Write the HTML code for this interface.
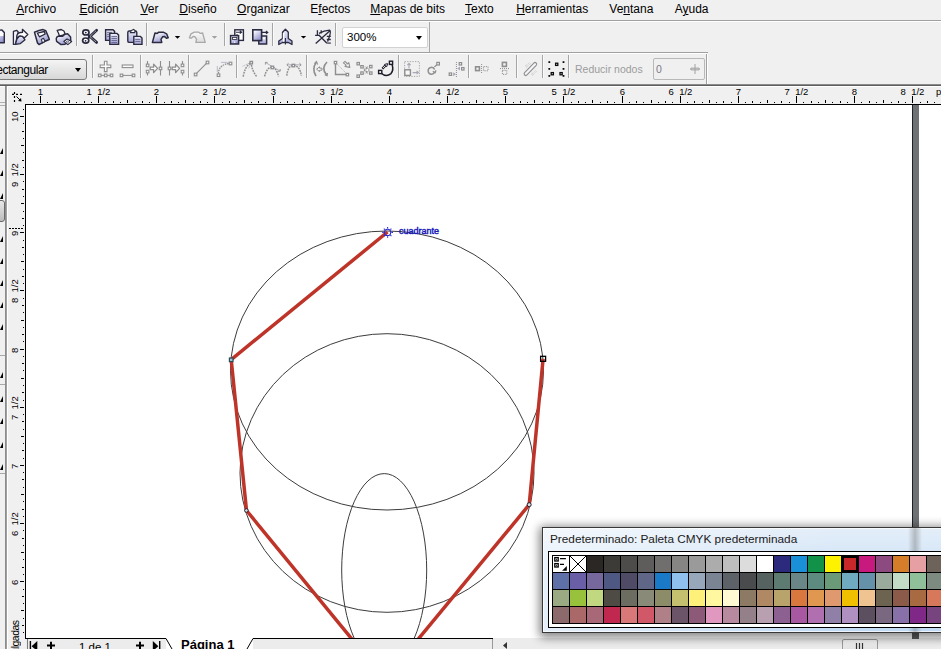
<!DOCTYPE html>
<html><head><meta charset="utf-8"><style>
html,body{margin:0;padding:0}
body{width:941px;height:649px;overflow:hidden;position:relative;background:#f0f0f0;font-family:'Liberation Sans', sans-serif}
.mi{position:absolute;top:2px;font-size:12px;color:#000;white-space:nowrap}
.mi u{text-decoration:underline;text-underline-offset:1px}
.tri{position:absolute;width:0;height:0;border-style:solid;border-width:4px 3px 0 3px;border-color:#000 transparent transparent transparent}
.rl{position:absolute;text-align:center;font-size:9.5px;line-height:10px;color:#000;white-space:nowrap}
.rlv{position:absolute;left:10px;width:10px;height:60px;writing-mode:vertical-rl;transform:rotate(180deg);text-align:center;font-size:9.5px;line-height:10px;color:#000;white-space:nowrap}
</style></head><body>
<div class="mi" style="left:16.2px"><u>A</u>rchivo</div><div class="mi" style="left:79.4px"><u>E</u>dición</div><div class="mi" style="left:140.4px"><u>V</u>er</div><div class="mi" style="left:179.3px"><u>D</u>iseño</div><div class="mi" style="left:237.1px"><u>O</u>rganizar</div><div class="mi" style="left:310.3px">E<u>f</u>ectos</div><div class="mi" style="left:370.3px"><u>M</u>apas de bits</div><div class="mi" style="left:465px"><u>T</u>exto</div><div class="mi" style="left:516.2px"><u>H</u>erramientas</div><div class="mi" style="left:609.3px">Ve<u>n</u>tana</div><div class="mi" style="left:674.7px">A<u>y</u>uda</div><div style="position:absolute;left:0;top:20px;width:941px;height:1px;background:#a0a0a0"></div><div style="position:absolute;left:0;top:21px;width:941px;height:1px;background:#fff"></div><div style="position:absolute;left:0;top:52px;width:708px;height:1px;background:#a0a0a0"></div><div style="position:absolute;left:0;top:53px;width:707px;height:1px;background:#fff"></div><div style="position:absolute;left:429px;top:22px;width:1px;height:30px;background:#a8a8a8"></div><div style="position:absolute;left:706px;top:54px;width:1px;height:30px;background:#a0a0a0"></div><div style="position:absolute;left:707px;top:54px;width:1px;height:30px;background:#fff"></div><div style="position:absolute;left:0;top:84px;width:941px;height:1px;background:#8a8a8a"></div><div style="position:absolute;left:0;top:85px;width:941px;height:1px;background:#5e5e5e"></div><div style="position:absolute;left:0;top:86px;width:941px;height:1px;background:#fff"></div><div style="position:absolute;left:76px;top:23px;width:1px;height:23px;background:#a6a6a6"></div><div style="position:absolute;left:77px;top:23px;width:1px;height:23px;background:#fafafa"></div><div style="position:absolute;left:146px;top:23px;width:1px;height:23px;background:#a6a6a6"></div><div style="position:absolute;left:147px;top:23px;width:1px;height:23px;background:#fafafa"></div><div style="position:absolute;left:224px;top:23px;width:1px;height:23px;background:#a6a6a6"></div><div style="position:absolute;left:225px;top:23px;width:1px;height:23px;background:#fafafa"></div><div style="position:absolute;left:272px;top:23px;width:1px;height:23px;background:#a6a6a6"></div><div style="position:absolute;left:273px;top:23px;width:1px;height:23px;background:#fafafa"></div><div style="position:absolute;left:335px;top:23px;width:1px;height:23px;background:#a6a6a6"></div><div style="position:absolute;left:336px;top:23px;width:1px;height:23px;background:#fafafa"></div><div style="position:absolute;left:92px;top:55px;width:1px;height:23px;background:#a6a6a6"></div><div style="position:absolute;left:93px;top:55px;width:1px;height:23px;background:#fafafa"></div><div style="position:absolute;left:140px;top:55px;width:1px;height:23px;background:#a6a6a6"></div><div style="position:absolute;left:141px;top:55px;width:1px;height:23px;background:#fafafa"></div><div style="position:absolute;left:188px;top:55px;width:1px;height:23px;background:#a6a6a6"></div><div style="position:absolute;left:189px;top:55px;width:1px;height:23px;background:#fafafa"></div><div style="position:absolute;left:236px;top:55px;width:1px;height:23px;background:#a6a6a6"></div><div style="position:absolute;left:237px;top:55px;width:1px;height:23px;background:#fafafa"></div><div style="position:absolute;left:306px;top:55px;width:1px;height:23px;background:#a6a6a6"></div><div style="position:absolute;left:307px;top:55px;width:1px;height:23px;background:#fafafa"></div><div style="position:absolute;left:398px;top:55px;width:1px;height:23px;background:#a6a6a6"></div><div style="position:absolute;left:399px;top:55px;width:1px;height:23px;background:#fafafa"></div><div style="position:absolute;left:468px;top:55px;width:1px;height:23px;background:#a6a6a6"></div><div style="position:absolute;left:469px;top:55px;width:1px;height:23px;background:#fafafa"></div><div style="position:absolute;left:516px;top:55px;width:1px;height:23px;background:#a6a6a6"></div><div style="position:absolute;left:517px;top:55px;width:1px;height:23px;background:#fafafa"></div><div style="position:absolute;left:542px;top:55px;width:1px;height:23px;background:#a6a6a6"></div><div style="position:absolute;left:543px;top:55px;width:1px;height:23px;background:#fafafa"></div><div style="position:absolute;left:568px;top:55px;width:1px;height:23px;background:#a6a6a6"></div><div style="position:absolute;left:569px;top:55px;width:1px;height:23px;background:#fafafa"></div><svg width="0" height="0" style="position:absolute"><defs>
<linearGradient id="lv" x1="0" y1="0" x2="1" y2="1"><stop offset="0" stop-color="#f0f0fa"/><stop offset="1" stop-color="#8c8cc0"/></linearGradient>
<linearGradient id="lg" x1="0" y1="0" x2="0" y2="1"><stop offset="0" stop-color="#ffffff"/><stop offset="1" stop-color="#c8c8c8"/></linearGradient>
</defs></svg><svg style="position:absolute;left:0;top:0" width="941" height="86" viewBox="0 0 941 86"><defs><linearGradient id="gl" x1="0" y1="0" x2="0.6" y2="1"><stop offset="0.15" stop-color="#fcfcff"/><stop offset="1" stop-color="#9494cc"/></linearGradient><linearGradient id="gl2" x1="0" y1="0" x2="0" y2="1"><stop offset="0" stop-color="#f0f0fa"/><stop offset="1" stop-color="#a4a4d6"/></linearGradient><linearGradient id="gd" x1="0" y1="0" x2="0" y2="1"><stop offset="0" stop-color="#fafafa"/><stop offset="1" stop-color="#dcdcdc"/></linearGradient></defs><path d="M-6 30.5 L2 30 L4.3 32.5 L4.3 42.7 L-6 42.7 Z" fill="url(#gl)" stroke="#2a2a40" stroke-width="1.4" stroke-linejoin="round"/><path d="M-6 31.5 L1.5 31.2 L3.3 33.3 L3.3 36 L-6 36 Z" fill="#fff"/><path d="M13.4 44.4 V31.4 L16.8 30.3 L18.2 32 L16.6 38.8 L15.6 44.2 Z" fill="#f2f2fa" stroke="#2a2a40" stroke-width="1.3" stroke-linejoin="round"/><path d="M15.4 44.4 L17 38.8 L19.8 35.8 L22.4 36.2 L25 39.8 L20.4 43.6 Z" fill="url(#gl2)" stroke="#2a2a40" stroke-width="1.3" stroke-linejoin="round"/><path d="M16.6 38.8 L17 35.2 Q18 32.6 20.6 32.5 L22.5 32.4 L22.4 29.3 L27.8 34.5 L24.2 38 L22.4 36.3 Q20.5 35.5 19.2 36 Q17.6 37.2 16.6 38.8 Z" fill="#fff" stroke="#2a2a40" stroke-width="1.3" stroke-linejoin="round"/><path d="M34.5 32.2 L39 30.5 L43 29.6 L45.8 30.8 L48.7 37.5 L49.3 39.5 L45 41.3 L39 44.6 L37.5 43 Z" fill="url(#gl)" stroke="#2a2a40" stroke-width="1.5" stroke-linejoin="round"/><path d="M37.4 33.2 L44.3 31.5 L45.2 34 L39.4 36.8 Z" fill="#fff" stroke="#2a2a40" stroke-width="1.3" stroke-linejoin="round"/><path d="M41.3 39.4 L43.5 38.3 L45 41.2 L42.5 42.9 Z" fill="#fff" stroke="#2a2a40" stroke-width="1.1" stroke-linejoin="round"/><path d="M56.2 38.6 Q56.6 36.4 58.8 36 L62.4 36.4 L65 34.2 L67.6 33.8 L70.6 37 L70.8 41 L65 44.2 L61 44.6 L56.6 41.4 Z" fill="url(#gl)" stroke="#2a2a40" stroke-width="1.4" stroke-linejoin="round"/><path d="M57.2 30.4 L61.2 29.5 L63.9 31 L65 33.5 L63 35.2 L59.5 36 L58.4 33 Z" fill="#fff" stroke="#2a2a40" stroke-width="1.3" stroke-linejoin="round"/><path d="M63.8 41.4 L67 39 L71.6 41.6 L67.8 44.6 Z" fill="#fff" stroke="#2a2a40" stroke-width="1.2" stroke-linejoin="round"/><path d="M66.2 41.8 L67.4 41 L68.8 41.8 L67.6 42.8 Z" fill="none" stroke="#2a2a40" stroke-width="0.7"/><path d="M89.2 37.2 L96.6 30.2 M89.2 35.8 L96.6 42.4" stroke="#2a2a40" stroke-width="2.8" stroke-linecap="round"/><path d="M90 36.4 L96.2 30.6 M90 36.6 L96.2 42" stroke="#fff" stroke-width="0.8" stroke-dasharray="1 0.7"/><ellipse cx="85.9" cy="32.4" rx="3.1" ry="2.6" fill="#fff" stroke="#2a2a40" stroke-width="1.7"/><circle cx="85.8" cy="32.6" r="0.9" fill="#2a2a40"/><ellipse cx="85.7" cy="40.6" rx="3.1" ry="2.6" fill="#fff" stroke="#2a2a40" stroke-width="1.7"/><circle cx="85.6" cy="40.8" r="0.9" fill="#2a2a40"/><path d="M105.6 29.8 L113 29.8 L114.6 31.4 L114.6 40.4 L105.6 40.4 Z" fill="url(#gl2)" stroke="#2a2a40" stroke-width="1.4"/><path d="M107 32.4 H112 M107 34.4 H109.5 M107 36.4 H109.5" stroke="#2a2a40" stroke-width="0.8" opacity="0.7"/><path d="M109.8 33.4 L117 33.4 L118.6 35 L118.6 44.4 L109.8 44.4 Z" fill="url(#gl2)" stroke="#2a2a40" stroke-width="1.4"/><path d="M111.4 36.6 H117 M111.4 38.6 H117 M111.4 40.6 H117 M111.4 42.6 H117" stroke="#5a5a88" stroke-width="0.9"/><rect x="127.8" y="31" width="9" height="11.4" rx="1.5" fill="url(#gl2)" stroke="#2a2a40" stroke-width="1.4"/><path d="M130.4 32.6 L131.2 30.6 L133.6 29.4 L135 30.6 L134.8 32.6 Z" fill="#fff" stroke="#2a2a40" stroke-width="1.1"/><path d="M133.8 36.4 L140.4 36.4 L142 38 L142 44.4 L133.8 44.4 Z" fill="url(#gl2)" stroke="#2a2a40" stroke-width="1.4"/><path d="M135.2 39.4 H140.4 M135.2 41.4 H140.4" stroke="#5a5a88" stroke-width="0.9"/><path d="M152.4 42.4 L155 33 L157.2 33.4 L158.8 32.2 L163.3 32.2 L166.6 33.8 L168.2 37.8 L166.4 38.2 L164.4 36.4 L162.6 36.8 L161 39.4 L161.8 42.4 Z" fill="url(#gl)" stroke="#2a2a40" stroke-width="1.5" stroke-linejoin="round"/><path d="M174.8 36 H180.2 L177.5 38.8 Z" fill="#000"/><path d="M205.2 42.4 L202.6 33 L200.4 33.4 L198.8 32.2 L194.3 32.2 L191 33.8 L189.4 37.8 L191.2 38.2 L193.2 36.4 L195 36.8 L196.6 39.4 L195.8 42.4 Z" fill="url(#gd)" stroke="#a8a8a8" stroke-width="1.3" stroke-linejoin="round"/><path d="M211.8 36 H217.2 L214.5 38.8 Z" fill="#a0a0a0"/><rect x="234.8" y="29.8" width="8.6" height="10.6" fill="#fff" stroke="#2a2a40" stroke-width="1.4"/><path d="M236 32.2 H241.5 M239.8 30.8 L241.6 32.2 L239.8 33.6 M236 35 H238" stroke="#2a2a40" stroke-width="1.1" fill="none"/><rect x="230.6" y="35.6" width="8" height="8.4" fill="url(#gl)" stroke="#2a2a40" stroke-width="1.5"/><rect x="232.4" y="37.4" width="4.4" height="2" fill="#fff" stroke="#2a2a40" stroke-width="0.8"/><rect x="234" y="41.6" width="1.2" height="1.2" fill="#fff"/><rect x="258.8" y="36" width="7.8" height="8" fill="url(#gl2)" stroke="#2a2a40" stroke-width="1.5"/><rect x="252.8" y="29.8" width="8.8" height="10.8" fill="url(#gl)" stroke="#2a2a40" stroke-width="1.6"/><path d="M262 32.4 H267.6 M266 31 L267.8 32.4 L266 33.8" stroke="#2a2a40" stroke-width="1.1" fill="none"/><rect x="263" y="37.6" width="2" height="1.6" fill="#fff"/><path d="M285.4 29.2 L288.3 32.2 V38.5 L292 41 V44.5 L288.3 42.5 H282.5 L278.8 44.5 V41 L282.5 38.5 V32.2 Z" fill="url(#gl2)" stroke="#2a2a40" stroke-width="1.3" stroke-linejoin="round"/><path d="M283.6 33 V41.6" stroke="#fff" stroke-width="1.6"/><path d="M285.4 38 V44.6" stroke="#2a2a40" stroke-width="1.1"/><path d="M300.8 35.9 H306.2 L303.5 38.6 Z" fill="#000"/><path d="M317.4 30.2 V35.3 M315.1 35.3 H319.2 M321.2 30.2 V33.4 M315.7 43.6 L330.2 30.4 M318.6 34.7 L326.5 42.8 L330.8 43.2 M319 33.4 Q324 30.4 329.6 30.2 Q331.4 31 329 37.8 L327.6 41.6 M326.8 36.4 H330.8 M326.8 39.5 H330.8" stroke="#2a2a40" stroke-width="1.3" fill="none"/></svg><svg style="position:absolute;left:0;top:0" width="941" height="86" viewBox="0 0 941 86"><path d="M104.4 61.2 H107 V65 H110.8 V67.6 H107 V71.6 H104.4 V67.6 H100.2 V65 H104.4 Z" fill="#fbfbfb" stroke="#8e8e8e" stroke-width="1.1"/><path d="M99.4 75.4 H112" stroke="#8e8e8e" stroke-width="1"/><rect x="98.4" y="74.1" width="2.6" height="2.6" fill="#f8f8f8" stroke="#8e8e8e" stroke-width="1.1"/><rect x="104.4" y="74.1" width="2.6" height="2.6" fill="#f8f8f8" stroke="#8e8e8e" stroke-width="1.1"/><rect x="110.2" y="74.1" width="2.6" height="2.6" fill="#f8f8f8" stroke="#8e8e8e" stroke-width="1.1"/><rect x="122.2" y="65" width="10.8" height="2.6" fill="#fbfbfb" stroke="#8e8e8e" stroke-width="1.1"/><path d="M121.4 75.4 H133.6" stroke="#8e8e8e" stroke-width="1"/><rect x="120.2" y="74.1" width="2.6" height="2.6" fill="#f8f8f8" stroke="#8e8e8e" stroke-width="1.1"/><rect x="132.2" y="74.1" width="2.6" height="2.6" fill="#f8f8f8" stroke="#8e8e8e" stroke-width="1.1"/><path d="M147.5 61 V64.2 M147.5 72.8 V75.6 M160.5 61 V75.6" stroke="#8e8e8e" stroke-width="1.1"/><rect x="146.3" y="64.1" width="2.6" height="2.6" fill="#f8f8f8" stroke="#8e8e8e" stroke-width="1.1"/><rect x="146.3" y="70.3" width="2.6" height="2.6" fill="#f8f8f8" stroke="#8e8e8e" stroke-width="1.1"/><rect x="159.2" y="67.1" width="2.6" height="2.6" fill="#f8f8f8" stroke="#8e8e8e" stroke-width="1.1"/><path d="M150.2 67.2 H153.6 V64.2 L157.6 68.4 L153.6 72.6 V69.6 H150.2 Z" fill="#fbfbfb" stroke="#8e8e8e" stroke-width="1.3" stroke-linejoin="round"/><path d="M169.5 61 V75.6 M182.5 61 V64.2 M182.5 72.8 V75.6" stroke="#8e8e8e" stroke-width="1.1"/><rect x="168.2" y="67.1" width="2.6" height="2.6" fill="#f8f8f8" stroke="#8e8e8e" stroke-width="1.1"/><rect x="181.2" y="64.1" width="2.6" height="2.6" fill="#f8f8f8" stroke="#8e8e8e" stroke-width="1.1"/><rect x="181.2" y="70.3" width="2.6" height="2.6" fill="#f8f8f8" stroke="#8e8e8e" stroke-width="1.1"/><path d="M172.2 67.2 H175.6 V64.2 L179.6 68.4 L175.6 72.6 V69.6 H172.2 Z" fill="#fbfbfb" stroke="#8e8e8e" stroke-width="1.3" stroke-linejoin="round"/><path d="M195.5 74.4 L207.4 62.4" stroke="#8e8e8e" stroke-width="1.1"/><rect x="194.3" y="73.2" width="2.6" height="2.6" fill="#f8f8f8" stroke="#8e8e8e" stroke-width="1.1"/><rect x="206.2" y="61.2" width="2.6" height="2.6" fill="#f8f8f8" stroke="#8e8e8e" stroke-width="1.1"/><path d="M218.4 73.6 Q218.6 64.6 229.6 63.4" stroke="#8e8e8e" stroke-width="1.3" fill="none" stroke-dasharray="1.6 0.8"/><path d="M217.3 66 V72 M221 62.4 H227.6" stroke="#b4b4c8" stroke-width="0.9"/><rect x="217.2" y="73.9" width="2.6" height="2.6" fill="#f8f8f8" stroke="#8e8e8e" stroke-width="1.1"/><rect x="229.2" y="62.2" width="2.6" height="2.6" fill="#f8f8f8" stroke="#8e8e8e" stroke-width="1.1"/><path d="M243.2 76.6 Q245 66 251.2 62.6 Q251.6 70 256.6 76.4" stroke="#8e8e8e" stroke-width="1.5" fill="none" stroke-dasharray="1.8 0.9"/><path d="M242.6 66.2 L251 62.4 L248.6 69" stroke="#a8a8b8" stroke-width="0.9" fill="none" stroke-dasharray="1 0.8"/><rect x="250" y="61.4" width="2.5" height="2.5" fill="#f8f8f8" stroke="#8e8e8e" stroke-width="1.3"/><path d="M264.6 76.4 Q267 67 272.4 67.2 Q276 67.5 278.6 76.4" stroke="#8e8e8e" stroke-width="1.5" fill="none" stroke-dasharray="1.8 0.9"/><path d="M265.6 62.6 L280 71" stroke="#a8a8b8" stroke-width="0.9"/><path d="M265.4 62.4 V64.6 M265.4 62.4 H267.6 M280.2 71.2 V69 M280.2 71.2 H278" stroke="#8e8e8e" stroke-width="0.9"/><rect x="271.1" y="66.2" width="2.5" height="2.5" fill="#f8f8f8" stroke="#8e8e8e" stroke-width="1.3"/><path d="M286.8 75.6 Q288 65.4 293.4 65.4 Q299.6 65.4 301.4 75.6" stroke="#8e8e8e" stroke-width="1.5" fill="none" stroke-dasharray="1.8 0.9"/><path d="M287 64.8 H301" stroke="#a8a8b8" stroke-width="0.9"/><path d="M288.6 63.2 L286.8 64.8 L288.6 66.4 M299.4 63.2 L301.2 64.8 L299.4 66.4" stroke="#8e8e8e" stroke-width="0.9" fill="none"/><rect x="292.1" y="64.3" width="2.5" height="2.5" fill="#f8f8f8" stroke="#8e8e8e" stroke-width="1.3"/><path d="M316.2 62.4 Q311.6 69 316 76.2" stroke="#8e8e8e" stroke-width="1.6" fill="none"/><path d="M314.4 63.6 L316.4 61.6 L317.6 64.4" stroke="#8e8e8e" stroke-width="1.2" fill="none"/><path d="M327 62 Q320.6 68.4 326.6 74.8" stroke="#8e8e8e" stroke-width="1.6" fill="none"/><path d="M324.8 74.6 L327 75.6 L327.4 73" stroke="#8e8e8e" stroke-width="1.4" fill="none"/><path d="M316.6 69.2 L319.6 66.8 V68.2 H322 V70.2 H319.6 V71.6 Z" fill="#fbfbfb" stroke="#8e8e8e" stroke-width="1"/><path d="M335.5 63.6 V74.5 H346.4" stroke="#8e8e8e" stroke-width="1.4" fill="none"/><path d="M337 64.2 L346.6 73.6" stroke="#a8a8b8" stroke-width="0.9" stroke-dasharray="1 1"/><rect x="334.3" y="61.4" width="2.4" height="2.4" fill="#f8f8f8" stroke="#8e8e8e" stroke-width="1.2"/><rect x="346.2" y="73.4" width="2.4" height="2.4" fill="#f8f8f8" stroke="#8e8e8e" stroke-width="1.2"/><path d="M343.4 62.8 L345 61.4 L347.6 64 L348.8 62.6 L349.8 67.4 L345 66.4 L346.2 65.2 Z" fill="#fbfbfb" stroke="#8e8e8e" stroke-width="1.1" stroke-linejoin="round"/><path d="M358.2 63.8 L362 67 M362 73.2 L358.2 76.2 M363.5 67 L370.7 66.6 M363.5 73.2 L370.7 73.2" stroke="#a8a8b8" stroke-width="0.9" stroke-dasharray="1 0.8"/><rect x="357" y="62.5" width="2.4" height="2.4" fill="#f8f8f8" stroke="#8e8e8e" stroke-width="1.2"/><rect x="360.8" y="65.6" width="2.4" height="2.4" fill="#f8f8f8" stroke="#8e8e8e" stroke-width="1.2"/><rect x="360.8" y="71.9" width="2.4" height="2.4" fill="#f8f8f8" stroke="#8e8e8e" stroke-width="1.2"/><rect x="357" y="75" width="2.4" height="2.4" fill="#f8f8f8" stroke="#8e8e8e" stroke-width="1.2"/><rect x="369.6" y="65.4" width="2.4" height="2.4" fill="#f8f8f8" stroke="#8e8e8e" stroke-width="1.2"/><rect x="369.6" y="71.9" width="2.4" height="2.4" fill="#f8f8f8" stroke="#8e8e8e" stroke-width="1.2"/><path d="M364.4 69 H366.6 V67.2 L369.4 70 L366.6 72.8 V71 H364.4 Z" fill="#fbfbfb" stroke="#8e8e8e" stroke-width="1"/><path d="M381 73 Q386 77.6 391 73.6 Q394 70 392 64.2" stroke="#1c1c2a" stroke-width="1.5" fill="none"/><path d="M382.4 68.6 L385.6 65.4 L384.6 64.4 L387.6 63.6 L386.8 66.6 L385.8 65.8" stroke="#1c1c2a" stroke-width="1" fill="#fff" stroke-linejoin="round"/><path d="M382.4 68.6 L385.6 65.4" stroke="#1c1c2a" stroke-width="2.2"/><path d="M382.8 68.2 L385.2 65.8" stroke="#fff" stroke-width="0.8"/><rect x="378.6" y="70.4" width="3.2" height="3.2" fill="#f8f8f8" stroke="#1c1c2a" stroke-width="1.4"/><rect x="389.4" y="61.2" width="3.2" height="3.2" fill="#f8f8f8" stroke="#1c1c2a" stroke-width="1.4"/><rect x="404.6" y="61.6" width="14.8" height="14.8" fill="none" stroke="#a8a8a8" stroke-width="1" stroke-dasharray="1.3 1.3"/><rect x="404.8" y="69.8" width="5.6" height="5.6" fill="#f8f8f8" stroke="#8e8e8e" stroke-width="1.4"/><path d="M409 68.4 V63.6 M407.4 65.2 L409 63.4 L410.6 65.2 M412.6 72.6 H418.4 M416.6 71 L418.4 72.6 L416.6 74.2" stroke="#a8a8b8" stroke-width="1.1" fill="none"/><path d="M434.6 69.6 Q433.6 67 431 67.4 Q427.8 68 428.2 71.4 Q428.8 74.4 431.6 74.2 Q433.8 74 434.8 72.2" stroke="#8e8e8e" stroke-width="1.5" fill="none"/><path d="M432.8 71.4 L435.2 72.6 L436 70.2" stroke="#8e8e8e" stroke-width="1.2" fill="none"/><path d="M434.4 67 L437.2 64.4" stroke="#8e8e8e" stroke-width="1.1"/><rect x="436.8" y="62.4" width="2.6" height="2.6" fill="#f8f8f8" stroke="#8e8e8e" stroke-width="1.2"/><path d="M456.4 62 V77" stroke="#8a8a8a" stroke-width="1" stroke-dasharray="1 1"/><rect x="459.2" y="62.6" width="2.4" height="2.4" fill="#f8f8f8" stroke="#8e8e8e" stroke-width="1.2"/><rect x="461.6" y="67.6" width="2.4" height="2.4" fill="#f8f8f8" stroke="#8e8e8e" stroke-width="1.2"/><rect x="449.2" y="73" width="2.4" height="2.4" fill="#f8f8f8" stroke="#8e8e8e" stroke-width="1.2"/><path d="M457.2 68.6 L460 66.6 V70.6 Z M456 74.2 L453.2 72.2 V76.2 Z" fill="#a8a8b8"/><rect x="475.6" y="66.8" width="3.8" height="3.8" fill="#f4f4f4" stroke="#8e8e8e" stroke-width="1.6"/><path d="M481.6 64 V73.4" stroke="#8a8a8a" stroke-width="1" stroke-dasharray="1 1"/><rect x="483.6" y="66.6" width="4.4" height="4.2" fill="none" stroke="#8a8a8a" stroke-width="1" stroke-dasharray="1.1 1.1"/><rect x="502.4" y="62.4" width="4" height="4" fill="#f4f4f4" stroke="#8e8e8e" stroke-width="1.6"/><path d="M500 68.6 H509.4" stroke="#8a8a8a" stroke-width="1" stroke-dasharray="1 1"/><rect x="502.4" y="70.4" width="4.4" height="4" fill="none" stroke="#8a8a8a" stroke-width="1" stroke-dasharray="1.1 1.1"/><path d="M525.8 73.8 L535 64.2" stroke="#8e8e8e" stroke-width="4.4" stroke-linecap="round"/><path d="M525.8 73.8 L535 64.2" stroke="#f4f4fa" stroke-width="2.2" stroke-linecap="round"/><path d="M525 66.2 L529.6 62.6 M526 67.4 L530.6 63.6 M531 74.6 L535.6 70.6 M532 75.6 L536.6 71.6" stroke="#b0b0b0" stroke-width="0.8" stroke-dasharray="0.9 0.9"/><rect x="548.4" y="61.2" width="1.8" height="1.8" fill="#0c0c0c"/><rect x="562.6" y="61.2" width="1.8" height="1.8" fill="#0c0c0c"/><rect x="548.4" y="68" width="1.8" height="1.8" fill="#0c0c0c"/><rect x="562.6" y="68" width="1.8" height="1.8" fill="#0c0c0c"/><rect x="548.4" y="75" width="1.8" height="1.8" fill="#0c0c0c"/><rect x="562.6" y="75" width="1.8" height="1.8" fill="#0c0c0c"/><rect x="555.6" y="63.2" width="2.2" height="2.2" fill="#fff" stroke="#0c0c0c" stroke-width="1.3"/><rect x="551.2" y="72.6" width="2.2" height="2.2" fill="#fff" stroke="#0c0c0c" stroke-width="1.3"/><rect x="560" y="72.6" width="2.2" height="2.2" fill="#fff" stroke="#0c0c0c" stroke-width="1.3"/></svg><div style="position:absolute;left:342px;top:27px;width:84px;height:19px;border:1px solid #d2d2d2;border-radius:2px;background:#fff"></div><div style="position:absolute;left:347px;top:31px;font:11.5px 'Liberation Sans', sans-serif;color:#000;letter-spacing:0px">300%</div><div class="tri" style="left:416px;top:36px;border-width:4px 3.5px 0 3.5px"></div><div style="position:absolute;left:-20px;top:59px;width:105px;height:19px;border:1px solid #7c7c7c;border-radius:3px;background:linear-gradient(#f4f4f4,#e6e6e6 50%,#d8d8d8)"></div><div style="position:absolute;left:-12px;top:63px;font:12px 'Liberation Sans', sans-serif;letter-spacing:-0.45px;color:#000">Rectangular</div><div class="tri" style="left:75px;top:68px;border-width:4px 3.5px 0 3.5px"></div><div style="position:absolute;left:575px;top:63px;font:10.5px 'Liberation Sans', sans-serif;color:#9c9c9c">Reducir nodos</div><div style="position:absolute;left:653px;top:58px;width:50px;height:20px;border:1px solid #b8b8b8;border-radius:2px;background:#f0f0f0"></div><div style="position:absolute;left:656px;top:62.5px;font:10.5px 'Liberation Sans', sans-serif;color:#7a7a88">0</div><svg style="position:absolute;left:690px;top:64px" width="11" height="11" viewBox="0 0 11 11"><path d="M5 0 V10 M0 5 H10" stroke="#a2a2a2" stroke-width="1"/><path d="M1 4 H9 V6 H1 Z" fill="none" stroke="#a2a2a2" stroke-width="0.8"/></svg><div style="position:absolute;left:5px;top:86px;width:1px;height:563px;background:#8c8c8c"></div><div style="position:absolute;left:6px;top:86px;width:1px;height:563px;background:#a0a0a0"></div><div style="position:absolute;left:0;top:102px;width:5px;height:1px;background:#b0b0b0"></div><div style="position:absolute;left:0;top:105px;width:5px;height:1px;background:#b0b0b0"></div><svg style="position:absolute;left:0;top:148px" width="3" height="6"><path d="M0 6 L3 6 L3 0 Z" fill="#000"/></svg><svg style="position:absolute;left:0;top:170px" width="3" height="6"><path d="M0 6 L3 6 L3 0 Z" fill="#000"/></svg><svg style="position:absolute;left:0;top:193px" width="3" height="6"><path d="M0 6 L3 6 L3 0 Z" fill="#000"/></svg><svg style="position:absolute;left:0;top:215px" width="3" height="6"><path d="M0 6 L3 6 L3 0 Z" fill="#000"/></svg><svg style="position:absolute;left:0;top:236px" width="3" height="6"><path d="M0 6 L3 6 L3 0 Z" fill="#000"/></svg><svg style="position:absolute;left:0;top:258px" width="3" height="6"><path d="M0 6 L3 6 L3 0 Z" fill="#000"/></svg><svg style="position:absolute;left:0;top:280px" width="3" height="6"><path d="M0 6 L3 6 L3 0 Z" fill="#000"/></svg><svg style="position:absolute;left:0;top:302px" width="3" height="6"><path d="M0 6 L3 6 L3 0 Z" fill="#000"/></svg><svg style="position:absolute;left:0;top:324px" width="3" height="6"><path d="M0 6 L3 6 L3 0 Z" fill="#000"/></svg><svg style="position:absolute;left:0;top:372px" width="3" height="6"><path d="M0 6 L3 6 L3 0 Z" fill="#000"/></svg><svg style="position:absolute;left:0;top:396px" width="3" height="6"><path d="M0 6 L3 6 L3 0 Z" fill="#000"/></svg><svg style="position:absolute;left:0;top:418px" width="3" height="6"><path d="M0 6 L3 6 L3 0 Z" fill="#000"/></svg><svg style="position:absolute;left:0;top:442px" width="3" height="6"><path d="M0 6 L3 6 L3 0 Z" fill="#000"/></svg><svg style="position:absolute;left:0;top:464px" width="3" height="6"><path d="M0 6 L3 6 L3 0 Z" fill="#000"/></svg><div style="position:absolute;left:-10px;top:200px;width:13px;height:20px;border:1px solid #6a6a6a;border-radius:3px;background:linear-gradient(#e8e8e8,#bcbcbc)"></div><div style="position:absolute;left:0;top:355px;width:5px;height:1px;background:#a8a8a8"></div><div style="position:absolute;left:0;top:384px;width:5px;height:1px;background:#a8a8a8"></div><div style="position:absolute;left:0;top:473px;width:5px;height:1px;background:#a8a8a8"></div><div style="position:absolute;left:8px;top:87px;width:933px;height:17px;background:#f0f0f0"></div><div style="position:absolute;left:7px;top:87px;width:1px;height:562px;background:#fff"></div><div class="rl" style="left:10.5px;top:87px;width:60px">1</div><div class="rl" style="left:68.5px;top:87px;width:60px">1&nbsp; 1/2</div><div class="rl" style="left:126.5px;top:87px;width:60px">2</div><div class="rl" style="left:184.5px;top:87px;width:60px">2&nbsp; 1/2</div><div class="rl" style="left:243.5px;top:87px;width:60px">3</div><div class="rl" style="left:301.5px;top:87px;width:60px">3&nbsp; 1/2</div><div class="rl" style="left:359.5px;top:87px;width:60px">4</div><div class="rl" style="left:417.5px;top:87px;width:60px">4&nbsp; 1/2</div><div class="rl" style="left:475.5px;top:87px;width:60px">5</div><div class="rl" style="left:533.5px;top:87px;width:60px">5&nbsp; 1/2</div><div class="rl" style="left:592.5px;top:87px;width:60px">6</div><div class="rl" style="left:650.5px;top:87px;width:60px">6&nbsp; 1/2</div><div class="rl" style="left:708.5px;top:87px;width:60px">7</div><div class="rl" style="left:766.5px;top:87px;width:60px">7&nbsp; 1/2</div><div class="rl" style="left:824.5px;top:87px;width:60px">8</div><div class="rl" style="left:882.5px;top:87px;width:60px">8&nbsp; 1/2</div><div style="position:absolute;left:33px;top:102px;width:1px;height:1px;background:#000"></div><div style="position:absolute;left:40px;top:96px;width:1px;height:7px;background:#000"></div><div style="position:absolute;left:47px;top:102px;width:1px;height:1px;background:#000"></div><div style="position:absolute;left:55px;top:101px;width:1px;height:2px;background:#000"></div><div style="position:absolute;left:62px;top:102px;width:1px;height:1px;background:#000"></div><div style="position:absolute;left:69px;top:100px;width:1px;height:3px;background:#000"></div><div style="position:absolute;left:76px;top:102px;width:1px;height:1px;background:#000"></div><div style="position:absolute;left:84px;top:101px;width:1px;height:2px;background:#000"></div><div style="position:absolute;left:91px;top:102px;width:1px;height:1px;background:#000"></div><div style="position:absolute;left:98px;top:96px;width:1px;height:7px;background:#000"></div><div style="position:absolute;left:105px;top:102px;width:1px;height:1px;background:#000"></div><div style="position:absolute;left:113px;top:101px;width:1px;height:2px;background:#000"></div><div style="position:absolute;left:120px;top:102px;width:1px;height:1px;background:#000"></div><div style="position:absolute;left:127px;top:100px;width:1px;height:3px;background:#000"></div><div style="position:absolute;left:135px;top:102px;width:1px;height:1px;background:#000"></div><div style="position:absolute;left:142px;top:101px;width:1px;height:2px;background:#000"></div><div style="position:absolute;left:149px;top:102px;width:1px;height:1px;background:#000"></div><div style="position:absolute;left:156px;top:96px;width:1px;height:7px;background:#000"></div><div style="position:absolute;left:164px;top:102px;width:1px;height:1px;background:#000"></div><div style="position:absolute;left:171px;top:101px;width:1px;height:2px;background:#000"></div><div style="position:absolute;left:178px;top:102px;width:1px;height:1px;background:#000"></div><div style="position:absolute;left:185px;top:100px;width:1px;height:3px;background:#000"></div><div style="position:absolute;left:193px;top:102px;width:1px;height:1px;background:#000"></div><div style="position:absolute;left:200px;top:101px;width:1px;height:2px;background:#000"></div><div style="position:absolute;left:207px;top:102px;width:1px;height:1px;background:#000"></div><div style="position:absolute;left:214px;top:96px;width:1px;height:7px;background:#000"></div><div style="position:absolute;left:222px;top:102px;width:1px;height:1px;background:#000"></div><div style="position:absolute;left:229px;top:101px;width:1px;height:2px;background:#000"></div><div style="position:absolute;left:236px;top:102px;width:1px;height:1px;background:#000"></div><div style="position:absolute;left:244px;top:100px;width:1px;height:3px;background:#000"></div><div style="position:absolute;left:251px;top:102px;width:1px;height:1px;background:#000"></div><div style="position:absolute;left:258px;top:101px;width:1px;height:2px;background:#000"></div><div style="position:absolute;left:265px;top:102px;width:1px;height:1px;background:#000"></div><div style="position:absolute;left:273px;top:96px;width:1px;height:7px;background:#000"></div><div style="position:absolute;left:280px;top:102px;width:1px;height:1px;background:#000"></div><div style="position:absolute;left:287px;top:101px;width:1px;height:2px;background:#000"></div><div style="position:absolute;left:294px;top:102px;width:1px;height:1px;background:#000"></div><div style="position:absolute;left:302px;top:100px;width:1px;height:3px;background:#000"></div><div style="position:absolute;left:309px;top:102px;width:1px;height:1px;background:#000"></div><div style="position:absolute;left:316px;top:101px;width:1px;height:2px;background:#000"></div><div style="position:absolute;left:324px;top:102px;width:1px;height:1px;background:#000"></div><div style="position:absolute;left:331px;top:96px;width:1px;height:7px;background:#000"></div><div style="position:absolute;left:338px;top:102px;width:1px;height:1px;background:#000"></div><div style="position:absolute;left:345px;top:101px;width:1px;height:2px;background:#000"></div><div style="position:absolute;left:353px;top:102px;width:1px;height:1px;background:#000"></div><div style="position:absolute;left:360px;top:100px;width:1px;height:3px;background:#000"></div><div style="position:absolute;left:367px;top:102px;width:1px;height:1px;background:#000"></div><div style="position:absolute;left:374px;top:101px;width:1px;height:2px;background:#000"></div><div style="position:absolute;left:382px;top:102px;width:1px;height:1px;background:#000"></div><div style="position:absolute;left:389px;top:96px;width:1px;height:7px;background:#000"></div><div style="position:absolute;left:396px;top:102px;width:1px;height:1px;background:#000"></div><div style="position:absolute;left:403px;top:101px;width:1px;height:2px;background:#000"></div><div style="position:absolute;left:411px;top:102px;width:1px;height:1px;background:#000"></div><div style="position:absolute;left:418px;top:100px;width:1px;height:3px;background:#000"></div><div style="position:absolute;left:425px;top:102px;width:1px;height:1px;background:#000"></div><div style="position:absolute;left:433px;top:101px;width:1px;height:2px;background:#000"></div><div style="position:absolute;left:440px;top:102px;width:1px;height:1px;background:#000"></div><div style="position:absolute;left:447px;top:96px;width:1px;height:7px;background:#000"></div><div style="position:absolute;left:454px;top:102px;width:1px;height:1px;background:#000"></div><div style="position:absolute;left:462px;top:101px;width:1px;height:2px;background:#000"></div><div style="position:absolute;left:469px;top:102px;width:1px;height:1px;background:#000"></div><div style="position:absolute;left:476px;top:100px;width:1px;height:3px;background:#000"></div><div style="position:absolute;left:483px;top:102px;width:1px;height:1px;background:#000"></div><div style="position:absolute;left:491px;top:101px;width:1px;height:2px;background:#000"></div><div style="position:absolute;left:498px;top:102px;width:1px;height:1px;background:#000"></div><div style="position:absolute;left:505px;top:96px;width:1px;height:7px;background:#000"></div><div style="position:absolute;left:513px;top:102px;width:1px;height:1px;background:#000"></div><div style="position:absolute;left:520px;top:101px;width:1px;height:2px;background:#000"></div><div style="position:absolute;left:527px;top:102px;width:1px;height:1px;background:#000"></div><div style="position:absolute;left:534px;top:100px;width:1px;height:3px;background:#000"></div><div style="position:absolute;left:542px;top:102px;width:1px;height:1px;background:#000"></div><div style="position:absolute;left:549px;top:101px;width:1px;height:2px;background:#000"></div><div style="position:absolute;left:556px;top:102px;width:1px;height:1px;background:#000"></div><div style="position:absolute;left:563px;top:96px;width:1px;height:7px;background:#000"></div><div style="position:absolute;left:571px;top:102px;width:1px;height:1px;background:#000"></div><div style="position:absolute;left:578px;top:101px;width:1px;height:2px;background:#000"></div><div style="position:absolute;left:585px;top:102px;width:1px;height:1px;background:#000"></div><div style="position:absolute;left:592px;top:100px;width:1px;height:3px;background:#000"></div><div style="position:absolute;left:600px;top:102px;width:1px;height:1px;background:#000"></div><div style="position:absolute;left:607px;top:101px;width:1px;height:2px;background:#000"></div><div style="position:absolute;left:614px;top:102px;width:1px;height:1px;background:#000"></div><div style="position:absolute;left:622px;top:96px;width:1px;height:7px;background:#000"></div><div style="position:absolute;left:629px;top:102px;width:1px;height:1px;background:#000"></div><div style="position:absolute;left:636px;top:101px;width:1px;height:2px;background:#000"></div><div style="position:absolute;left:643px;top:102px;width:1px;height:1px;background:#000"></div><div style="position:absolute;left:651px;top:100px;width:1px;height:3px;background:#000"></div><div style="position:absolute;left:658px;top:102px;width:1px;height:1px;background:#000"></div><div style="position:absolute;left:665px;top:101px;width:1px;height:2px;background:#000"></div><div style="position:absolute;left:672px;top:102px;width:1px;height:1px;background:#000"></div><div style="position:absolute;left:680px;top:96px;width:1px;height:7px;background:#000"></div><div style="position:absolute;left:687px;top:102px;width:1px;height:1px;background:#000"></div><div style="position:absolute;left:694px;top:101px;width:1px;height:2px;background:#000"></div><div style="position:absolute;left:702px;top:102px;width:1px;height:1px;background:#000"></div><div style="position:absolute;left:709px;top:100px;width:1px;height:3px;background:#000"></div><div style="position:absolute;left:716px;top:102px;width:1px;height:1px;background:#000"></div><div style="position:absolute;left:723px;top:101px;width:1px;height:2px;background:#000"></div><div style="position:absolute;left:731px;top:102px;width:1px;height:1px;background:#000"></div><div style="position:absolute;left:738px;top:96px;width:1px;height:7px;background:#000"></div><div style="position:absolute;left:745px;top:102px;width:1px;height:1px;background:#000"></div><div style="position:absolute;left:752px;top:101px;width:1px;height:2px;background:#000"></div><div style="position:absolute;left:760px;top:102px;width:1px;height:1px;background:#000"></div><div style="position:absolute;left:767px;top:100px;width:1px;height:3px;background:#000"></div><div style="position:absolute;left:774px;top:102px;width:1px;height:1px;background:#000"></div><div style="position:absolute;left:781px;top:101px;width:1px;height:2px;background:#000"></div><div style="position:absolute;left:789px;top:102px;width:1px;height:1px;background:#000"></div><div style="position:absolute;left:796px;top:96px;width:1px;height:7px;background:#000"></div><div style="position:absolute;left:803px;top:102px;width:1px;height:1px;background:#000"></div><div style="position:absolute;left:811px;top:101px;width:1px;height:2px;background:#000"></div><div style="position:absolute;left:818px;top:102px;width:1px;height:1px;background:#000"></div><div style="position:absolute;left:825px;top:100px;width:1px;height:3px;background:#000"></div><div style="position:absolute;left:832px;top:102px;width:1px;height:1px;background:#000"></div><div style="position:absolute;left:840px;top:101px;width:1px;height:2px;background:#000"></div><div style="position:absolute;left:847px;top:102px;width:1px;height:1px;background:#000"></div><div style="position:absolute;left:854px;top:96px;width:1px;height:7px;background:#000"></div><div style="position:absolute;left:861px;top:102px;width:1px;height:1px;background:#000"></div><div style="position:absolute;left:869px;top:101px;width:1px;height:2px;background:#000"></div><div style="position:absolute;left:876px;top:102px;width:1px;height:1px;background:#000"></div><div style="position:absolute;left:883px;top:100px;width:1px;height:3px;background:#000"></div><div style="position:absolute;left:891px;top:102px;width:1px;height:1px;background:#000"></div><div style="position:absolute;left:898px;top:101px;width:1px;height:2px;background:#000"></div><div style="position:absolute;left:905px;top:102px;width:1px;height:1px;background:#000"></div><div style="position:absolute;left:912px;top:96px;width:1px;height:7px;background:#000"></div><div style="position:absolute;left:920px;top:102px;width:1px;height:1px;background:#000"></div><div style="position:absolute;left:927px;top:101px;width:1px;height:2px;background:#000"></div><div style="position:absolute;left:934px;top:102px;width:1px;height:1px;background:#000"></div><div style="position:absolute;left:23px;top:109px;width:1px;height:1px;background:#000"></div><div style="position:absolute;left:20px;top:116px;width:4px;height:1px;background:#000"></div><div class="rlv" style="top:87px">10</div><div style="position:absolute;left:23px;top:123px;width:1px;height:1px;background:#000"></div><div style="position:absolute;left:22px;top:131px;width:2px;height:1px;background:#000"></div><div style="position:absolute;left:23px;top:138px;width:1px;height:1px;background:#000"></div><div style="position:absolute;left:21px;top:145px;width:3px;height:1px;background:#000"></div><div style="position:absolute;left:23px;top:152px;width:1px;height:1px;background:#000"></div><div style="position:absolute;left:22px;top:160px;width:2px;height:1px;background:#000"></div><div style="position:absolute;left:23px;top:167px;width:1px;height:1px;background:#000"></div><div style="position:absolute;left:20px;top:174px;width:4px;height:1px;background:#000"></div><div class="rlv" style="top:145px">9&nbsp; 1/2</div><div style="position:absolute;left:23px;top:181px;width:1px;height:1px;background:#000"></div><div style="position:absolute;left:22px;top:189px;width:2px;height:1px;background:#000"></div><div style="position:absolute;left:23px;top:196px;width:1px;height:1px;background:#000"></div><div style="position:absolute;left:21px;top:203px;width:3px;height:1px;background:#000"></div><div style="position:absolute;left:23px;top:211px;width:1px;height:1px;background:#000"></div><div style="position:absolute;left:22px;top:218px;width:2px;height:1px;background:#000"></div><div style="position:absolute;left:23px;top:225px;width:1px;height:1px;background:#000"></div><div style="position:absolute;left:20px;top:232px;width:4px;height:1px;background:#000"></div><div class="rlv" style="top:203px">9</div><div style="position:absolute;left:23px;top:240px;width:1px;height:1px;background:#000"></div><div style="position:absolute;left:22px;top:247px;width:2px;height:1px;background:#000"></div><div style="position:absolute;left:23px;top:254px;width:1px;height:1px;background:#000"></div><div style="position:absolute;left:21px;top:261px;width:3px;height:1px;background:#000"></div><div style="position:absolute;left:23px;top:269px;width:1px;height:1px;background:#000"></div><div style="position:absolute;left:22px;top:276px;width:2px;height:1px;background:#000"></div><div style="position:absolute;left:23px;top:283px;width:1px;height:1px;background:#000"></div><div style="position:absolute;left:20px;top:290px;width:4px;height:1px;background:#000"></div><div class="rlv" style="top:261px">8&nbsp; 1/2</div><div style="position:absolute;left:23px;top:298px;width:1px;height:1px;background:#000"></div><div style="position:absolute;left:22px;top:305px;width:2px;height:1px;background:#000"></div><div style="position:absolute;left:23px;top:312px;width:1px;height:1px;background:#000"></div><div style="position:absolute;left:21px;top:320px;width:3px;height:1px;background:#000"></div><div style="position:absolute;left:23px;top:327px;width:1px;height:1px;background:#000"></div><div style="position:absolute;left:22px;top:334px;width:2px;height:1px;background:#000"></div><div style="position:absolute;left:23px;top:341px;width:1px;height:1px;background:#000"></div><div style="position:absolute;left:20px;top:349px;width:4px;height:1px;background:#000"></div><div class="rlv" style="top:320px">8</div><div style="position:absolute;left:23px;top:356px;width:1px;height:1px;background:#000"></div><div style="position:absolute;left:22px;top:363px;width:2px;height:1px;background:#000"></div><div style="position:absolute;left:23px;top:370px;width:1px;height:1px;background:#000"></div><div style="position:absolute;left:21px;top:378px;width:3px;height:1px;background:#000"></div><div style="position:absolute;left:23px;top:385px;width:1px;height:1px;background:#000"></div><div style="position:absolute;left:22px;top:392px;width:2px;height:1px;background:#000"></div><div style="position:absolute;left:23px;top:400px;width:1px;height:1px;background:#000"></div><div style="position:absolute;left:20px;top:407px;width:4px;height:1px;background:#000"></div><div class="rlv" style="top:378px">7&nbsp; 1/2</div><div style="position:absolute;left:23px;top:414px;width:1px;height:1px;background:#000"></div><div style="position:absolute;left:22px;top:421px;width:2px;height:1px;background:#000"></div><div style="position:absolute;left:23px;top:429px;width:1px;height:1px;background:#000"></div><div style="position:absolute;left:21px;top:436px;width:3px;height:1px;background:#000"></div><div style="position:absolute;left:23px;top:443px;width:1px;height:1px;background:#000"></div><div style="position:absolute;left:22px;top:450px;width:2px;height:1px;background:#000"></div><div style="position:absolute;left:23px;top:458px;width:1px;height:1px;background:#000"></div><div style="position:absolute;left:20px;top:465px;width:4px;height:1px;background:#000"></div><div class="rlv" style="top:436px">7</div><div style="position:absolute;left:23px;top:472px;width:1px;height:1px;background:#000"></div><div style="position:absolute;left:22px;top:479px;width:2px;height:1px;background:#000"></div><div style="position:absolute;left:23px;top:487px;width:1px;height:1px;background:#000"></div><div style="position:absolute;left:21px;top:494px;width:3px;height:1px;background:#000"></div><div style="position:absolute;left:23px;top:501px;width:1px;height:1px;background:#000"></div><div style="position:absolute;left:22px;top:509px;width:2px;height:1px;background:#000"></div><div style="position:absolute;left:23px;top:516px;width:1px;height:1px;background:#000"></div><div style="position:absolute;left:20px;top:523px;width:4px;height:1px;background:#000"></div><div class="rlv" style="top:494px">6&nbsp; 1/2</div><div style="position:absolute;left:23px;top:530px;width:1px;height:1px;background:#000"></div><div style="position:absolute;left:22px;top:538px;width:2px;height:1px;background:#000"></div><div style="position:absolute;left:23px;top:545px;width:1px;height:1px;background:#000"></div><div style="position:absolute;left:21px;top:552px;width:3px;height:1px;background:#000"></div><div style="position:absolute;left:23px;top:559px;width:1px;height:1px;background:#000"></div><div style="position:absolute;left:22px;top:567px;width:2px;height:1px;background:#000"></div><div style="position:absolute;left:23px;top:574px;width:1px;height:1px;background:#000"></div><div style="position:absolute;left:20px;top:581px;width:4px;height:1px;background:#000"></div><div class="rlv" style="top:552px">6</div><div style="position:absolute;left:23px;top:589px;width:1px;height:1px;background:#000"></div><div style="position:absolute;left:22px;top:596px;width:2px;height:1px;background:#000"></div><div style="position:absolute;left:23px;top:603px;width:1px;height:1px;background:#000"></div><div style="position:absolute;left:21px;top:610px;width:3px;height:1px;background:#000"></div><div style="position:absolute;left:23px;top:618px;width:1px;height:1px;background:#000"></div><div style="position:absolute;left:22px;top:625px;width:2px;height:1px;background:#000"></div><div style="position:absolute;left:23px;top:632px;width:1px;height:1px;background:#000"></div><div class="rlv" style="top:599px;height:60px;text-align:left;font-size:10.5px;letter-spacing:-0.5px">pulgadas</div><div class="rl" style="left:936px;top:87px;width:20px;text-align:left">pulgadas</div><div style="position:absolute;left:389px;top:99px;width:1px;height:4px;background:repeating-linear-gradient(#000 0 1px,transparent 1px 2px)"></div><div style="position:absolute;left:9px;top:228px;width:15px;height:1px;background:repeating-linear-gradient(90deg,#000 0 2px,transparent 2px 3px)"></div><svg style="position:absolute;left:11px;top:91px" width="13" height="12" viewBox="0 0 13 12"><path d="M3.5 1 V3 M3.5 5 V7 M3.5 9 V11 M1 3.3 H3 M5 3.3 H7 M9 3.3 H11" stroke="#000" stroke-width="1.2"/><path d="M5.5 5.5 L9.5 9.5" stroke="#000" stroke-width="1"/><path d="M10.5 10.5 L7 10 L10 7 Z" fill="#000"/></svg><div style="position:absolute;left:25px;top:104px;width:916px;height:1px;background:#000"></div><div style="position:absolute;left:25px;top:104px;width:1px;height:535px;background:#000"></div><div style="position:absolute;left:26px;top:105px;width:915px;height:533px;background:#fff"></div><div style="position:absolute;left:912px;top:105px;width:7px;height:533px;background:#6f7274;border-left:1px solid #202020;box-sizing:border-box"></div><svg style="position:absolute;left:0;top:0" width="941" height="638" viewBox="0 0 941 638">
<defs><clipPath id="cv"><rect x="26" y="105" width="886" height="533"/></clipPath></defs>
<g clip-path="url(#cv)" fill="none" stroke="#3c3c3c" stroke-width="1">
<ellipse cx="387" cy="370.5" rx="156.5" ry="139.5"/>
<ellipse cx="387" cy="473" rx="147" ry="139.3"/>
<ellipse cx="384.2" cy="570" rx="42.5" ry="96.4"/>
<polyline points="353.5,641 246.5,510.5 231.2,359.6 387.5,232" stroke="#be3428" stroke-width="3.5" stroke-linejoin="round"/>
<polyline points="417.5,640 529.2,504.7 543.1,358.8" stroke="#be3428" stroke-width="3.5" stroke-linejoin="round"/>
</g>
<rect x="229.4" y="358" width="3.6" height="3.6" fill="#9cc4cc" stroke="#2c4c58" stroke-width="1.2"/>
<rect x="540.6" y="356.3" width="5" height="5" fill="none" stroke="#000" stroke-width="1.3"/>
<circle cx="246.4" cy="510.5" r="1.8" fill="#ddd" stroke="#223" stroke-width="1"/>
<circle cx="529.2" cy="504.7" r="2" fill="#ddd" stroke="#223" stroke-width="1"/>
<g stroke="#2a2ad0" stroke-width="1.1" fill="none">
<circle cx="387.6" cy="232.4" r="3.1"/>
<path d="M387.6 227 V228.6 M387.6 236.2 V237.8 M382.2 232.4 H383.8 M391.4 232.4 H393 M383.8 228.6 L384.8 229.6 M390.4 235.2 L391.4 236.2 M391.4 228.6 L390.4 229.6 M384.8 235.2 L383.8 236.2"/>
</g>
<text x="399" y="233.6" font-family="Liberation Sans" font-size="9" fill="#1a1ab8" stroke="#1a1ab8" stroke-width="0.45">cuadrante</text>
</svg><div style="position:absolute;left:26px;top:638px;width:915px;height:11px;background:#ececec"></div><div style="position:absolute;left:25px;top:638px;width:141px;height:1px;background:#000"></div><div style="position:absolute;left:253px;top:638px;width:240px;height:1px;background:#000"></div><div style="position:absolute;left:166px;top:638px;width:87px;height:11px;background:#fff"></div><svg style="position:absolute;left:160px;top:637px" width="100" height="12"><path d="M0 1.5 H6 L12 12" stroke="#000" fill="none"/><path d="M99 1.5 H93 L87 12" stroke="#000" fill="none"/></svg><div style="position:absolute;left:27px;top:639px;width:1px;height:10px;background:#7a7a7a"></div><svg style="position:absolute;left:29px;top:641px" width="10" height="9" viewBox="0 0 10 9"><path d="M1.4 0 V9" stroke="#000" stroke-width="1.4"/><path d="M8.3 0 L2.6 5.2 L8.3 10 Z" fill="#000"/></svg><svg style="position:absolute;left:46px;top:641px" width="10" height="9" viewBox="0 0 10 9"><path d="M1 4.5 H9 M5 0.8 V9" stroke="#000" stroke-width="2"/></svg><div style="position:absolute;left:79px;top:641px;font:11.5px 'Liberation Sans', sans-serif;color:#000">1 de 1</div><svg style="position:absolute;left:135px;top:641px" width="10" height="9" viewBox="0 0 10 9"><path d="M1 4.5 H9 M5 0.8 V9" stroke="#000" stroke-width="2"/></svg><svg style="position:absolute;left:152px;top:641px" width="9" height="9" viewBox="0 0 9 9"><path d="M7.7 0 V9" stroke="#000" stroke-width="1.4"/><path d="M0.8 0 L6.4 5.2 L0.8 10 Z" fill="#000"/></svg><div style="position:absolute;left:181px;top:637px;font:bold 13px 'Liberation Sans', sans-serif;color:#000">Página 1</div><div style="position:absolute;left:492px;top:639px;width:1px;height:10px;background:#9a9a9a"></div><svg style="position:absolute;left:502px;top:642px" width="6" height="7" viewBox="0 0 6 7"><path d="M5 0 L1 3.5 L5 7 Z" fill="#333"/></svg><div style="position:absolute;left:842px;top:639px;width:34px;height:12px;border:1px solid #9a9a9a;border-radius:2px;background:linear-gradient(#f8f8f8,#dcdcdc)"></div><svg style="position:absolute;left:855px;top:643px" width="9" height="6"><path d="M1.5 0 V6 M4.5 0 V6 M7.5 0 V6" stroke="#333" stroke-width="1.2"/></svg><div style="position:absolute;left:912px;top:632px;width:7px;height:7px;background:#5a5a5a"></div><div style="position:absolute;left:530px;top:517px;width:430px;height:128px;box-shadow:0 2px 10px 3px rgba(0,0,0,0.45);border-radius:2px;left:542px;top:527px;width:420px;height:106px"></div><div style="position:absolute;left:542px;top:527px;width:420px;height:106px;border:1px solid #383838;box-sizing:border-box;background:linear-gradient(90deg,rgba(255,255,255,0.55),rgba(255,255,255,0) 70%),linear-gradient(#e4eef9,#cfe2f6 40%,#c2daf3)"></div><div style="position:absolute;left:543px;top:528px;width:420px;height:104px;border:1px solid rgba(255,255,255,0.7);box-sizing:border-box"></div><div style="position:absolute;left:908px;top:528px;width:14px;height:104px;background:linear-gradient(90deg,rgba(90,90,90,0),rgba(90,90,90,0.35),rgba(90,90,90,0))"></div><div style="position:absolute;left:550px;top:532px;font:11.8px 'Liberation Sans', sans-serif;color:#1a1a1a">Predeterminado: Paleta CMYK predeterminada</div><div style="position:absolute;left:548px;top:551px;width:400px;height:77px;border:1px solid #000;box-sizing:border-box;background:#fff"></div><div style="position:absolute;left:552px;top:555px;width:389px;height:69px;background:#000"></div><div style="position:absolute;left:553px;top:556px;width:16px;height:16px;background:#fff"></div><svg style="position:absolute;left:553px;top:556px" width="16" height="16"><rect x="1.8" y="1.6" width="3.4" height="3.4" fill="none" stroke="#000" stroke-width="1.3"/><rect x="3" y="2.8" width="1" height="1" fill="#000"/><rect x="1.8" y="7.6" width="3.4" height="3.4" fill="none" stroke="#000" stroke-width="1.3"/><rect x="3" y="8.8" width="1" height="1" fill="#000"/><path d="M7 2.6 H12.9 M7 8.4 H11" stroke="#000" stroke-width="1.1"/><path d="M9.1 14.7 L13.8 10.1 L13.8 14.7 Z" fill="#000"/></svg><div style="position:absolute;left:570px;top:556px;width:16px;height:16px;background:#fff"></div><svg style="position:absolute;left:570px;top:556px" width="16" height="16"><path d="M0 0 L16 16 M16 0 L0 16" stroke="#000" stroke-width="1"/></svg><div style="position:absolute;left:587px;top:556px;width:16px;height:16px;background:#2b2724"></div><div style="position:absolute;left:604px;top:556px;width:16px;height:16px;background:#3c3b38"></div><div style="position:absolute;left:621px;top:556px;width:16px;height:16px;background:#4d4c4a"></div><div style="position:absolute;left:638px;top:556px;width:16px;height:16px;background:#5e5d5b"></div><div style="position:absolute;left:655px;top:556px;width:16px;height:16px;background:#706f6d"></div><div style="position:absolute;left:672px;top:556px;width:16px;height:16px;background:#868584"></div><div style="position:absolute;left:689px;top:556px;width:16px;height:16px;background:#9b9a9a"></div><div style="position:absolute;left:706px;top:556px;width:16px;height:16px;background:#acacac"></div><div style="position:absolute;left:723px;top:556px;width:16px;height:16px;background:#bebebe"></div><div style="position:absolute;left:740px;top:556px;width:16px;height:16px;background:#dcdcdc"></div><div style="position:absolute;left:757px;top:556px;width:16px;height:16px;background:#ffffff"></div><div style="position:absolute;left:774px;top:556px;width:16px;height:16px;background:#2b2a7c"></div><div style="position:absolute;left:791px;top:556px;width:16px;height:16px;background:#1a90d8"></div><div style="position:absolute;left:808px;top:556px;width:16px;height:16px;background:#129248"></div><div style="position:absolute;left:825px;top:556px;width:16px;height:16px;background:#fff200"></div><div style="position:absolute;left:842px;top:556px;width:16px;height:16px;background:#c8282a"></div><div style="position:absolute;left:859px;top:556px;width:16px;height:16px;background:#c8197f"></div><div style="position:absolute;left:876px;top:556px;width:16px;height:16px;background:#8c4a80"></div><div style="position:absolute;left:893px;top:556px;width:16px;height:16px;background:#d67d2a"></div><div style="position:absolute;left:910px;top:556px;width:16px;height:16px;background:#e6a0a4"></div><div style="position:absolute;left:927px;top:556px;width:14px;height:16px;background:#6e635a"></div><div style="position:absolute;left:553px;top:573px;width:16px;height:16px;background:#5f6fa8"></div><div style="position:absolute;left:570px;top:573px;width:16px;height:16px;background:#6a5ea6"></div><div style="position:absolute;left:587px;top:573px;width:16px;height:16px;background:#76689c"></div><div style="position:absolute;left:604px;top:573px;width:16px;height:16px;background:#4e5882"></div><div style="position:absolute;left:621px;top:573px;width:16px;height:16px;background:#4f4a66"></div><div style="position:absolute;left:638px;top:573px;width:16px;height:16px;background:#606687"></div><div style="position:absolute;left:655px;top:573px;width:16px;height:16px;background:#1a7ac8"></div><div style="position:absolute;left:672px;top:573px;width:16px;height:16px;background:#90c0ee"></div><div style="position:absolute;left:689px;top:573px;width:16px;height:16px;background:#98a8ba"></div><div style="position:absolute;left:706px;top:573px;width:16px;height:16px;background:#7b8492"></div><div style="position:absolute;left:723px;top:573px;width:16px;height:16px;background:#5c6268"></div><div style="position:absolute;left:740px;top:573px;width:16px;height:16px;background:#4a4b4c"></div><div style="position:absolute;left:757px;top:573px;width:16px;height:16px;background:#56625f"></div><div style="position:absolute;left:774px;top:573px;width:16px;height:16px;background:#5e7b72"></div><div style="position:absolute;left:791px;top:573px;width:16px;height:16px;background:#6a8686"></div><div style="position:absolute;left:808px;top:573px;width:16px;height:16px;background:#5e8b80"></div><div style="position:absolute;left:825px;top:573px;width:16px;height:16px;background:#6a9a78"></div><div style="position:absolute;left:842px;top:573px;width:16px;height:16px;background:#70aac0"></div><div style="position:absolute;left:859px;top:573px;width:16px;height:16px;background:#6592a8"></div><div style="position:absolute;left:876px;top:573px;width:16px;height:16px;background:#9aab9e"></div><div style="position:absolute;left:893px;top:573px;width:16px;height:16px;background:#c2dcc6"></div><div style="position:absolute;left:910px;top:573px;width:16px;height:16px;background:#90c09a"></div><div style="position:absolute;left:927px;top:573px;width:14px;height:16px;background:#7c8a80"></div><div style="position:absolute;left:553px;top:590px;width:16px;height:16px;background:#9aab84"></div><div style="position:absolute;left:570px;top:590px;width:16px;height:16px;background:#98c23c"></div><div style="position:absolute;left:587px;top:590px;width:16px;height:16px;background:#c2d880"></div><div style="position:absolute;left:604px;top:590px;width:16px;height:16px;background:#4e4a44"></div><div style="position:absolute;left:621px;top:590px;width:16px;height:16px;background:#6c6c60"></div><div style="position:absolute;left:638px;top:590px;width:16px;height:16px;background:#8a8a78"></div><div style="position:absolute;left:655px;top:590px;width:16px;height:16px;background:#8c8c68"></div><div style="position:absolute;left:672px;top:590px;width:16px;height:16px;background:#c4c070"></div><div style="position:absolute;left:689px;top:590px;width:16px;height:16px;background:#fff07a"></div><div style="position:absolute;left:706px;top:590px;width:16px;height:16px;background:#fff8a0"></div><div style="position:absolute;left:723px;top:590px;width:16px;height:16px;background:#fffad2"></div><div style="position:absolute;left:740px;top:590px;width:16px;height:16px;background:#8c7a64"></div><div style="position:absolute;left:757px;top:590px;width:16px;height:16px;background:#b08864"></div><div style="position:absolute;left:774px;top:590px;width:16px;height:16px;background:#b8a46a"></div><div style="position:absolute;left:791px;top:590px;width:16px;height:16px;background:#d8783e"></div><div style="position:absolute;left:808px;top:590px;width:16px;height:16px;background:#e09850"></div><div style="position:absolute;left:825px;top:590px;width:16px;height:16px;background:#e0986e"></div><div style="position:absolute;left:842px;top:590px;width:16px;height:16px;background:#f0c000"></div><div style="position:absolute;left:859px;top:590px;width:16px;height:16px;background:#f0c490"></div><div style="position:absolute;left:876px;top:590px;width:16px;height:16px;background:#6c6450"></div><div style="position:absolute;left:893px;top:590px;width:16px;height:16px;background:#8c5a48"></div><div style="position:absolute;left:910px;top:590px;width:16px;height:16px;background:#a86a40"></div><div style="position:absolute;left:927px;top:590px;width:14px;height:16px;background:#d8785a"></div><div style="position:absolute;left:553px;top:607px;width:16px;height:16px;background:#8c6a6c"></div><div style="position:absolute;left:570px;top:607px;width:16px;height:16px;background:#aa6868"></div><div style="position:absolute;left:587px;top:607px;width:16px;height:16px;background:#a86878"></div><div style="position:absolute;left:604px;top:607px;width:16px;height:16px;background:#c02850"></div><div style="position:absolute;left:621px;top:607px;width:16px;height:16px;background:#d87878"></div><div style="position:absolute;left:638px;top:607px;width:16px;height:16px;background:#d05868"></div><div style="position:absolute;left:655px;top:607px;width:16px;height:16px;background:#b08088"></div><div style="position:absolute;left:672px;top:607px;width:16px;height:16px;background:#6c5468"></div><div style="position:absolute;left:689px;top:607px;width:16px;height:16px;background:#8c5a78"></div><div style="position:absolute;left:706px;top:607px;width:16px;height:16px;background:#e098c0"></div><div style="position:absolute;left:723px;top:607px;width:16px;height:16px;background:#b88aa0"></div><div style="position:absolute;left:740px;top:607px;width:16px;height:16px;background:#948088"></div><div style="position:absolute;left:757px;top:607px;width:16px;height:16px;background:#b8a0b0"></div><div style="position:absolute;left:774px;top:607px;width:16px;height:16px;background:#8c6090"></div><div style="position:absolute;left:791px;top:607px;width:16px;height:16px;background:#a858a0"></div><div style="position:absolute;left:808px;top:607px;width:16px;height:16px;background:#b070b0"></div><div style="position:absolute;left:825px;top:607px;width:16px;height:16px;background:#9080a8"></div><div style="position:absolute;left:842px;top:607px;width:16px;height:16px;background:#b090c0"></div><div style="position:absolute;left:859px;top:607px;width:16px;height:16px;background:#5c5060"></div><div style="position:absolute;left:876px;top:607px;width:16px;height:16px;background:#7a6880"></div><div style="position:absolute;left:893px;top:607px;width:16px;height:16px;background:#8870a8"></div><div style="position:absolute;left:910px;top:607px;width:16px;height:16px;background:#802888"></div><div style="position:absolute;left:927px;top:607px;width:14px;height:16px;background:#784480"></div><div style="position:absolute;left:842px;top:556px;width:16px;height:16px;border:2px solid #000;box-sizing:border-box;background:#c8282a"></div>
</body></html>
